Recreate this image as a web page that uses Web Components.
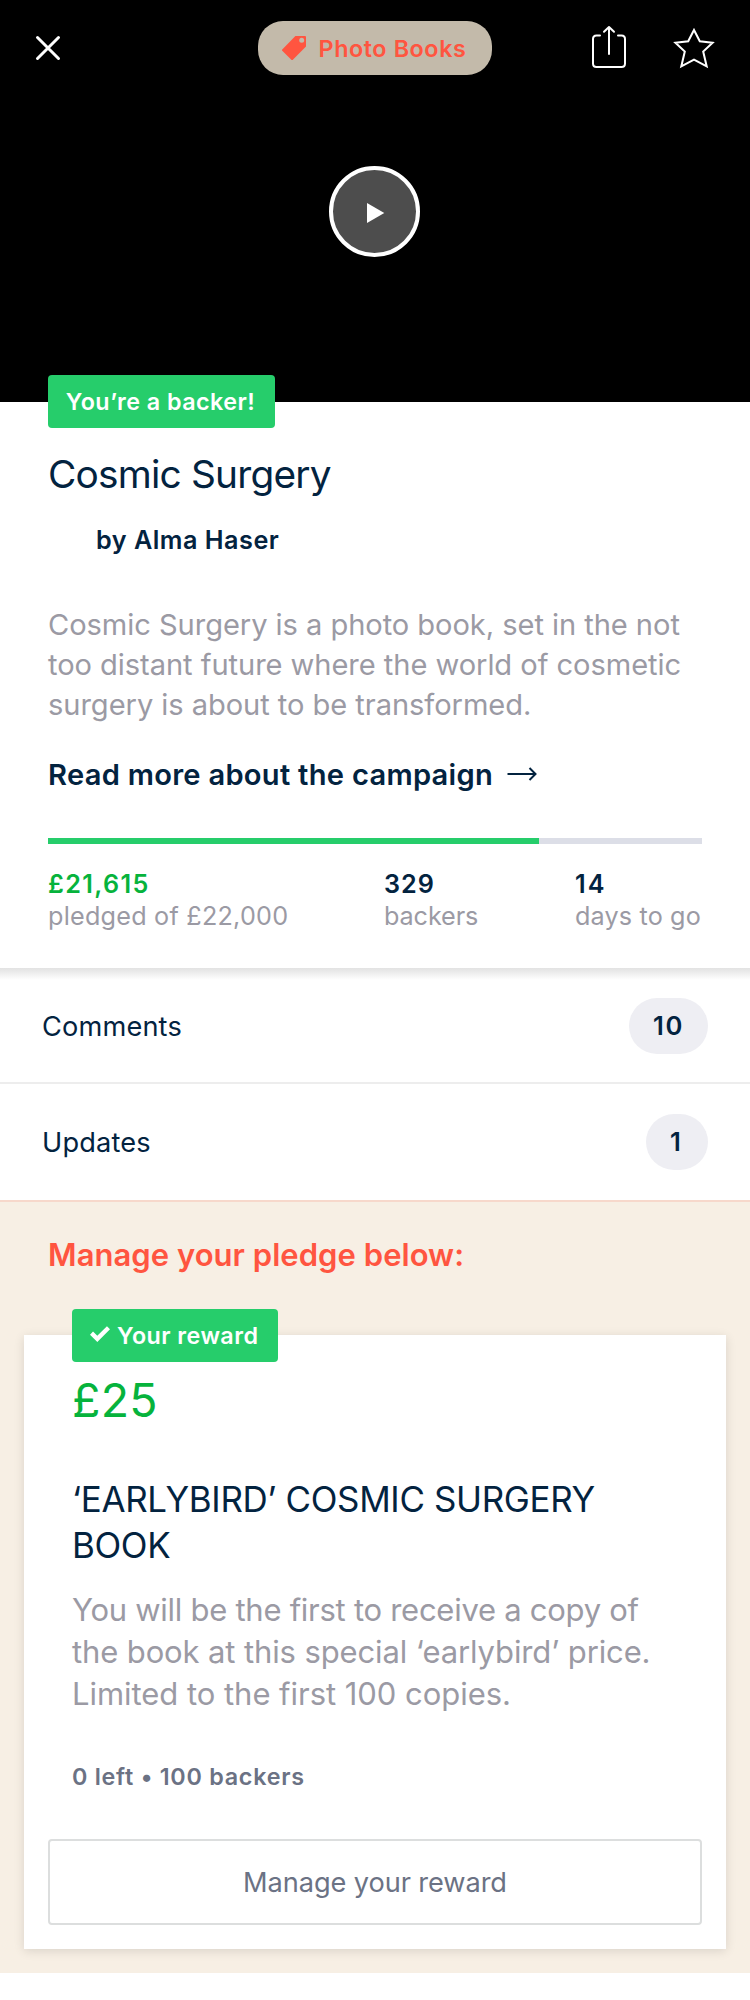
<!DOCTYPE html>
<html lang="en">
<head>
<meta charset="utf-8">
<title>Cosmic Surgery</title>
<style>
html,body{margin:0;background:#fff}
body{width:750px;min-height:2000px;overflow-x:hidden;font-family:Inter,"Liberation Sans",sans-serif;color:#03233f;font-kerning:normal;-webkit-font-smoothing:antialiased}
</style>
</head>
<body>
<project-page></project-page>
<script>
const define = (name, html) => {
  const tpl = document.createElement('template');
  tpl.innerHTML = html;
  customElements.define(name, class extends HTMLElement {
    constructor() {
      super();
      this.attachShadow({ mode: 'open' }).append(tpl.content.cloneNode(true));
    }
  });
};

define('category-chip', `
<style>
:host{display:flex;align-items:center;box-sizing:border-box;width:234px;height:54px;padding-left:24px;border-radius:25px;background:#c3baaa;color:#ff5540;font-size:23.3px;font-weight:600;letter-spacing:.6px;white-space:nowrap}
svg{width:24px;height:24px;margin-right:12.500px;flex:none}
</style>
<svg viewBox="0 0 24 24"><path fill="#ff5540" fill-rule="evenodd" d="M13.4 0H23Q24 0 24 1V10.6L10.6 24H9.6L0 14.6V13.8ZM19.7 1.800a2.5 2.5 0 1 0 0 5a2.5 2.5 0 1 0 0-5Z"/></svg>
<slot></slot>`);

define('play-button', `
<style>
:host{display:flex;box-sizing:border-box;width:91px;height:91px;border:4px solid #fff;border-radius:50%;background:#4d4d4d}
svg{width:83px;height:83px}
</style>
<svg viewBox="0 0 83 83"><path d="M34 33L51.3 43L34 53Z" fill="#fff"/></svg>`);

define('project-hero', `
<style>
:host{display:flex;flex-direction:column;align-items:center;height:402px;background:#000}
header{display:flex;align-items:center;width:100%;height:54px;margin-top:21px;box-sizing:border-box;padding:0 35px}
.close{width:26px;height:26px;margin-right:197px}
.share{width:36px;height:44px;margin:0 0 2px 99px}
.star{width:42px;height:42px;margin-left:46px}
svg{flex:none;fill:none;stroke:#fff;stroke-width:2}
play-button{margin:91px 1px 0 0}
</style>
<header>
<svg class="close" viewBox="0 0 26 26" stroke-linecap="round"><path d="M2.5 2.5L23.5 23.5M23.5 2.5L2.5 23.5" style="stroke-width:3"/></svg>
<category-chip>Photo Books</category-chip>
<svg class="share" viewBox="0 0 36 44" stroke-linecap="round" stroke-linejoin="round"><path d="M9 10.5H5.500Q2 10.500 2 14V38.500Q2 42 5.500 42H30.500Q34 42 34 38.500V14Q34 10.500 30.500 10.500H27M18 29V2M13 6.800L18 2L23 6.800"/></svg>
<svg class="star" viewBox="0 0 42 42" stroke-linejoin="miter"><path d="M21 3L26.800 14.300L39.600 15.700L30.200 24.600L33.700 39.400L21 32.600L8.300 39.400L11.800 24.600L2.400 15.700L15.200 14.300Z"/></svg>
</header>
<play-button></play-button>`);

define('status-badge', `
<style>
:host{display:flex;align-items:center;justify-content:center;box-sizing:border-box;height:53px;padding-right:2px;border-radius:4px;background:#26cd6b;color:#fff;font-size:23.3px;font-weight:600;letter-spacing:.46px;white-space:nowrap}
</style><slot name="icon"></slot><slot></slot>`);

define('stat-item', `
<style>
:host{display:block;font-size:25.2px;line-height:32px;color:#9b9aa4;white-space:nowrap}
div{font-weight:600;color:var(--figure,#03233f);letter-spacing:var(--figure-gap,1px)}
p{margin:0}
</style><div><slot name="figure"></slot></div><p><slot></slot></p>`);

define('funding-bar', `
<style>
:host{display:block;height:6px;background:#dcdee7}
div{height:100%;width:490.500px;background:#26cd6b}
</style><div></div>`);

define('project-summary', `
<style>
:host{display:block;position:relative;height:566px;box-sizing:border-box;padding:48px 48px 0;background:#fff}
status-badge{position:absolute;left:48px;top:-27px;width:227px}
h1,h2,p{margin:0;white-space:nowrap}
h1{font-size:38.800px;font-weight:400;line-height:48px;letter-spacing:-.79px}
h2{margin:26px 0 0 48px;font-size:25.200px;font-weight:600;line-height:32px;letter-spacing:.5px}
.blurb{margin-top:49px;font-size:29.100px;line-height:40px;letter-spacing:-.06px;color:#9b9aa4}
.more{display:flex;align-items:center;margin-top:30px;font-size:29.100px;font-weight:600;line-height:40px;letter-spacing:.28px}
.more svg{width:32px;height:16px;margin:-2px 0 0 13px}
funding-bar{margin-top:43px}
.stats{display:grid;grid-template-columns:336px 191px auto;margin-top:24px}
</style>
<status-badge>You’re a backer!</status-badge>
<h1>Cosmic Surgery</h1>
<h2>by Alma Haser</h2>
<p class="blurb">Cosmic Surgery is a photo book, set in the not<br>too distant future where the world of cosmetic<br>surgery is about to be transformed.</p>
<p class="more">Read more about the campaign<svg viewBox="0 0 32 16" fill="none" stroke="#03233f" stroke-width="2"><path d="M1.500 8H29.500M23.500 2L29.500 8L23.500 14"/></svg></p>
<funding-bar></funding-bar>
<div class="stats">
<stat-item style="--figure:#06b33c;--figure-gap:1.350px;letter-spacing:.230px"><span slot="figure">£21,615</span>pledged of £22,000</stat-item>
<stat-item style="letter-spacing:-.100px"><span slot="figure">329</span>backers</stat-item>
<stat-item style="--figure-gap:2px;letter-spacing:.150px"><span slot="figure">14</span>days to go</stat-item>
</div>`);

define('nav-row', `
<style>
:host{display:flex;justify-content:space-between;align-items:flex-start;box-sizing:border-box;padding:30px 42px 0;font-size:27.200px;line-height:56px;border-bottom:2px solid var(--rule,#ededed);background:var(--surface,#fff)}
.label{padding-top:1px;letter-spacing:.150px}
b{display:block;box-sizing:border-box;height:56px;width:var(--pill);padding-left:24px;border-radius:28px;background:#eeeef3;font-size:25.600px;font-weight:600;letter-spacing:1.600px}
</style><span class="label"><slot></slot></span><b><slot name="count"></slot></b>`);

define('reward-card', `
<style>
:host{display:block;position:relative;box-sizing:border-box;height:614px;margin:60px 24px 0;padding:37px 24px 0;background:#fff;box-shadow:0 2px 10px rgba(0,0,0,.12)}
status-badge{position:absolute;left:48px;top:-26px;width:206px}
status-badge svg{display:block;width:20px;height:16px;margin:-4px 7.500px 0 0}
.copy{padding:0 24px}
h2,h3,p{margin:0;white-space:nowrap}
h2{font-size:46.500px;font-weight:400;line-height:56px;letter-spacing:.300px;color:#06b33c}
h3{margin-top:48px;font-size:34.900px;font-weight:400;line-height:46px;letter-spacing:-.330px}
.text{margin-top:21px;font-size:31px;line-height:42px;color:#9b9aa4}
.text span{display:block;letter-spacing:-.270px}
.text span:nth-child(2){letter-spacing:-.120px}
.text span:nth-child(3){letter-spacing:-.040px}
.count{margin-top:46px;font-size:23.300px;font-weight:600;line-height:31px;letter-spacing:.750px;color:#6b7284}
button{display:block;width:100%;height:86px;margin:47px 0 0;padding:0;border:2px solid #dcdede;border-radius:4px;background:#fff;color:#6b7284;font:400 27.200px Inter,sans-serif;letter-spacing:-.090px}
</style>
<status-badge><svg slot="icon" viewBox="0 0 20 16" fill="none" stroke="#fff" stroke-width="4.400"><path d="M1.500 7.200L7.300 12.800L18.500 1.700"/></svg>Your reward</status-badge>
<div class="copy">
<h2>£25</h2>
<h3>‘EARLYBIRD’ COSMIC SURGERY<br>BOOK</h3>
<p class="text"><span>You will be the first to receive a copy of</span><span>the book at this special ‘earlybird’ price.</span><span>Limited to the first 100 copies.</span></p>
<p class="count">0 left • 100 backers</p>
</div>
<button>Manage your reward</button>`);

define('pledge-section', `
<style>
:host{display:block;box-sizing:border-box;height:771px;padding-top:33px;background:#f7efe4}
h2{margin:0 0 0 48px;font-size:31px;font-weight:600;line-height:40px;letter-spacing:.040px;color:#ff5540}
</style><h2>Manage your pledge below:</h2><reward-card></reward-card>`);

define('project-page', `
<style>
:host{display:block}
.comments{height:116px;--pill:79px;--surface:linear-gradient(#e2e2e2,#f0f0f0 6px,#fff 12px)}
.updates{height:118px;--pill:62px;--rule:#f7d8cb}
</style>
<project-hero></project-hero>
<project-summary></project-summary>
<nav-row class="comments">Comments<span slot="count">10</span></nav-row>
<nav-row class="updates">Updates<span slot="count">1</span></nav-row>
<pledge-section></pledge-section>`);
</script>
</body>
</html>
